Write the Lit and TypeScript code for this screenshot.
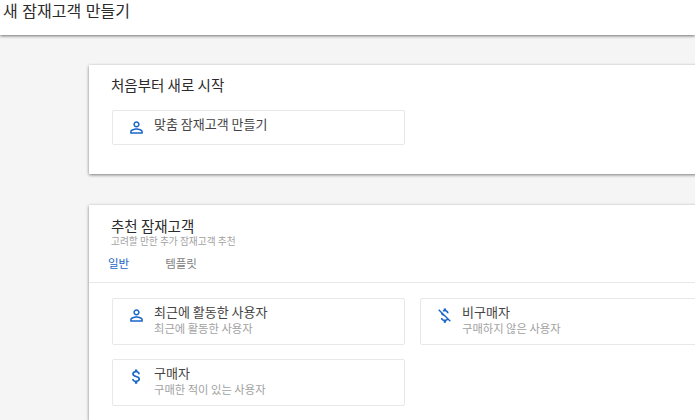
import {css, html, LitElement, svg} from 'lit';
import {customElement} from 'lit/decorators.js';

const ICONS = {
  person: svg`<path d="M12 5.9c1.16 0 2.1.94 2.1 2.1s-.94 2.1-2.1 2.1S9.9 9.16 9.9 8s.94-2.1 2.1-2.1m0 9c2.97 0 6.1 1.46 6.1 2.1v1.1H5.9V17c0-.64 3.13-2.1 6.1-2.1M12 4C9.79 4 8 5.79 8 8s1.79 4 4 4 4-1.79 4-4-1.79-4-4-4zm0 9c-2.67 0-8 1.34-8 4v3h16v-3c0-2.66-5.33-4-8-4z"/>`,
  money: svg`<path d="M11.8 10.9c-2.27-.59-3-1.2-3-2.15 0-1.09 1.01-1.85 2.7-1.85 1.78 0 2.44.85 2.5 2.1h2.21c-.07-1.72-1.12-3.3-3.21-3.81V3h-3v2.16c-1.94.42-3.5 1.68-3.5 3.61 0 2.31 1.91 3.46 4.7 4.13 2.5.6 3 1.48 3 2.41 0 .69-.49 1.79-2.7 1.79-2.06 0-2.87-.92-2.98-2.1h-2.2c.12 2.19 1.76 3.42 3.68 3.83V21h3v-2.15c1.95-.37 3.5-1.5 3.5-3.55 0-2.84-2.43-3.81-4.7-4.4z"/>`,
  moneyOff: svg`<path d="M12.5 6.9c1.78 0 2.44.85 2.5 2.1h2.21c-.07-1.72-1.12-3.3-3.21-3.81V3h-3v2.16c-.53.12-1.03.3-1.48.54l1.47 1.47c.41-.17.91-.27 1.51-.27zM5.33 4.06L4.06 5.33 7.5 8.77c0 2.08 1.56 3.21 3.91 3.91l3.51 3.51c-.34.48-1.05.91-2.42.91-2.06 0-2.87-.92-2.98-2.1h-2.2c.12 2.19 1.76 3.42 3.68 3.83V21h3v-2.15c.96-.18 1.82-.55 2.45-1.12l2.22 2.22 1.27-1.27L5.33 4.06z"/>`,
};

type IconName = keyof typeof ICONS;

@customElement('app-root')
export class AppRoot extends LitElement {
  static override styles = css`
    :host {
      display: block;
      height: 420px;
      overflow: hidden;
      background: #f5f5f5;
      color: #2b2b2b;
      font-family: 'Noto Sans CJK KR', 'Liberation Sans', sans-serif;
    }

    .top {
      box-sizing: border-box;
      height: 35px;
      padding-left: 3px;
      background: #fff;
      box-shadow: 0 1px 3px rgba(0, 0, 0, 0.55);
      font-size: 16px;
      line-height: 20px;
      word-spacing: 1px;
      position: relative;
    }

    .page {
      display: flex;
      flex-direction: column;
      gap: 31px;
      width: 760px;
      padding: 30px 0 0 89px;
    }

    .card {
      background: #fff;
      box-shadow: 0 1px 3px rgba(0, 0, 0, 0.5);
    }

    .start {
      box-sizing: border-box;
      height: 109px;
      padding: 10px 0 0 22px;
    }

    .title {
      font-size: 14.5px;
      line-height: 20px;
    }

    .start .title {
      margin-bottom: 15px;
    }

    .head {
      box-sizing: border-box;
      height: 78px;
      padding: 11px 0 0 22px;
      border-bottom: 1px solid #e8e8e8;
    }

    .sub {
      margin-top: -1px;
      font-size: 9.7px;
      line-height: 12px;
      color: #a2a2a2;
    }

    .tabs {
      display: flex;
      gap: 36px;
      margin: 8px 0 0 -3px;
      font-size: 11.5px;
      line-height: 16px;
      color: #808080;
    }

    .tabs .active {
      color: #1a66c9;
    }

    .grid {
      display: grid;
      grid-template-columns: 293px 293px;
      gap: 14px 15px;
      padding: 15px 0 14px 23px;
    }

    .start .tile {
      width: 293px;
      height: 35px;
      margin-left: 1px;
    }

    .tile {
      box-sizing: border-box;
      height: 47px;
      display: flex;
      gap: 8px;
      padding: 4px 0 0 14px;
      border: 1px solid #e8e8e8;
      border-radius: 2px;
      background: #fff;
    }

    .icon {
      flex: none;
      width: 19px;
      height: 19px;
      margin-top: 3px;
      fill: #1a66c9;
    }

    .name {
      font-size: 13px;
      line-height: 18px;
      color: #444;
    }

    .desc {
      font-size: 11.3px;
      line-height: 14px;
      color: #a2a2a2;
    }
  `;

  private renderTile(icon: IconName, name: string, desc?: string) {
    return html`<div class="tile">
      <svg class="icon" viewBox="0 0 24 24">${ICONS[icon]}</svg>
      <div>
        <div class="name">${name}</div>
        ${desc ? html`<div class="desc">${desc}</div>` : null}
      </div>
    </div>`;
  }

  override render() {
    return html`
      <div class="top">새 잠재고객 만들기</div>
      <div class="page">
        <section class="card start">
          <div class="title">처음부터 새로 시작</div>
          ${this.renderTile('person', '맞춤 잠재고객 만들기')}
        </section>
        <section class="card">
          <div class="head">
            <div class="title">추천 잠재고객</div>
            <div class="sub">고려할 만한 추가 잠재고객 추천</div>
            <div class="tabs">
              <span class="active">일반</span>
              <span>템플릿</span>
            </div>
          </div>
          <div class="grid">
            ${this.renderTile('person', '최근에 활동한 사용자', '최근에 활동한 사용자')}
            ${this.renderTile('moneyOff', '비구매자', '구매하지 않은 사용자')}
            ${this.renderTile('money', '구매자', '구매한 적이 있는 사용자')}
          </div>
        </section>
      </div>
    `;
  }
}

declare global {
  interface HTMLElementTagNameMap {
    'app-root': AppRoot;
  }
}
